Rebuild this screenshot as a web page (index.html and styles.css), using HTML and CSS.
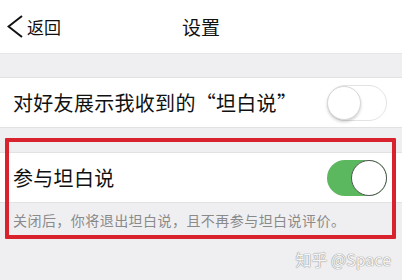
FILE: index.html
```html
<!DOCTYPE html>
<html lang="zh-CN">
<head>
<meta charset="utf-8">
<link rel="stylesheet" href="styles.css">
</head>
<body>
<div class="page">
  <header class="nav">
    <div class="back">
      <svg class="chev" width="16" height="24" viewBox="0 0 16 24"><polyline points="15,1 1.5,11.5 15,22" fill="none" stroke="#111" stroke-width="2"/></svg>
      <span class="back-text">返回</span>
    </div>
    <div class="title">设置</div>
  </header>
  <div class="gap gap-top"></div>
  <div class="row">
    <span class="label">对好友展示我收到的“坦白说”</span>
    <span class="toggle off"><span class="knob"></span></span>
  </div>
  <div class="gap"></div>
  <div class="row">
    <span class="label">参与坦白说</span>
    <span class="toggle on"><span class="knob"></span></span>
  </div>
  <div class="note">关闭后，你将退出坦白说，且不再参与坦白说评价。</div>
  <div class="highlight"></div>
  <div class="watermark">知乎 @Space</div>
</div>
</body>
</html>
```
FILE: styles.css
```css
html, body {
  margin: 0;
  padding: 0;
}
body {
  background: #efeff2;
  font-family: "Noto Sans CJK SC", "Noto Sans", sans-serif;
  color: #111;
}
.page {
  position: relative;
  width: 402px;
  height: 280px;
  overflow: hidden;
}
.nav {
  position: relative;
  height: 54px;
  background: #fff;
  display: flex;
  align-items: center;
  justify-content: center;
  border-bottom: 1px solid #e6e6e6;
  box-sizing: border-box;
}
.back {
  position: absolute;
  left: 7px;
  top: 15px;
  display: flex;
  align-items: center;
  gap: 4px;
}
.chev {
  display: block;
}
.back-text {
  font-size: 17px;
  line-height: 24px;
}
.title {
  font-size: 19px;
  line-height: 24px;
  margin-top: 1px;
}
.gap {
  height: 24px;
}
.gap-top {
  height: 23px;
}
.row {
  height: 51px;
  background: #fff;
  border-top: 1px solid #e2e2e2;
  border-bottom: 1px solid #e2e2e2;
  box-sizing: border-box;
  display: flex;
  align-items: center;
  justify-content: space-between;
  padding: 0 15px 0 13px;
}
.label {
  font-size: 20px;
  letter-spacing: 0.3px;
}
.toggle {
  position: relative;
  width: 60px;
  height: 36px;
  border-radius: 18px;
  box-sizing: border-box;
  display: flex;
  align-items: center;
}
.toggle.off {
  background: #fff;
  border: 1.5px solid #e3e3e3;
  justify-content: flex-start;
}
.toggle.on {
  background: #5bb85f;
  justify-content: flex-end;
}
.knob {
  width: 34px;
  height: 34px;
  border-radius: 50%;
  background: #fff;
  box-sizing: border-box;
}
.toggle.off .knob {
  margin-left: -1px;
  border: 1px solid #d8d8d8;
  box-shadow: 0 2px 3px rgba(0,0,0,0.18);
}
.toggle.on .knob {
  width: 36px;
  height: 36px;
  border: 1.5px solid #555;
}
.note {
  height: 34px;
  display: flex;
  align-items: center;
  padding-left: 13px;
  font-size: 14px;
  letter-spacing: 0.45px;
  color: #8a8a8a;
}
.highlight {
  position: absolute;
  left: 5px;
  top: 138px;
  width: 391px;
  height: 101px;
  border: 4px solid #d8232e;
  box-sizing: border-box;
  border-radius: 1px;
}
.watermark {
  position: absolute;
  right: 11px;
  top: 248px;
  font-size: 16px;
  line-height: 22px;
  color: #f6f6f6;
  text-shadow: 0 0 1px #888, 0 0 1px #888;
  font-family: "Noto Sans CJK SC", "Liberation Sans", sans-serif;
}
```
